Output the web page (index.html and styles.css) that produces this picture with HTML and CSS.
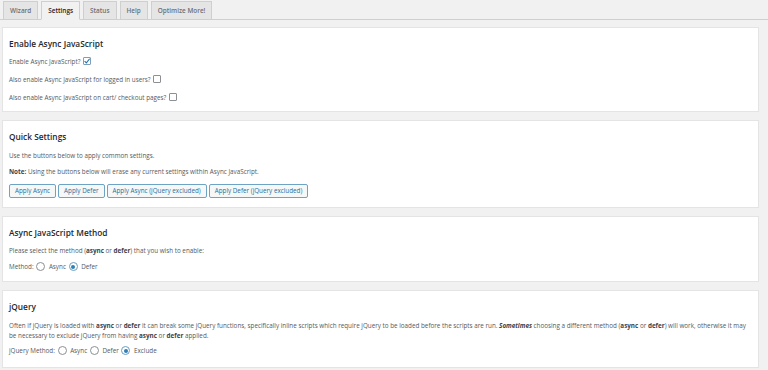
FILE: index.html
```html
<!DOCTYPE html>
<html>
<head>
<meta charset="utf-8">
<link rel="stylesheet" href="styles.css">
</head>
<body>
<div class="page">
  <nav class="tabs">
    <a class="tab">Wizard</a>
    <a class="tab active">Settings</a>
    <a class="tab">Status</a>
    <a class="tab">Help</a>
    <a class="tab">Optimize More!</a>
  </nav>
  <div class="panels">
    <section class="panel">
      <h2>Enable Async JavaScript</h2>
      <p class="first">Enable Async JavaScript? <span class="cb checked"><svg viewBox="0 0 10 10" width="8" height="8"><path d="M2 5.2 L4.2 7.3 L8.3 2.2" fill="none" stroke="#2271b1" stroke-width="1.4"/></svg></span></p>
      <p>Also enable Async JavaScript for logged in users? <span class="cb"></span></p>
      <p>Also enable Async JavaScript on cart/ checkout pages? <span class="cb"></span></p>
    </section>
    <section class="panel panel-quick">
      <h2>Quick Settings</h2>
      <p class="first">Use the buttons below to apply common settings.</p>
      <p class="note"><b>Note:</b> Using the buttons below will erase any current settings within Async JavaScript.</p>
      <div class="buttons">
        <button class="btn">Apply Async</button>
        <button class="btn">Apply Defer</button>
        <button class="btn">Apply Async (jQuery excluded)</button>
        <button class="btn">Apply Defer (jQuery excluded)</button>
      </div>
    </section>
    <section class="panel panel-method">
      <h2>Async JavaScript Method</h2>
      <p class="first">Please select the method (<b>async</b> or <b>defer</b>) that you wish to enable:</p>
      <p class="radios">Method: <span class="rd"></span> Async <span class="rd on"></span> Defer</p>
    </section>
    <section class="panel panel-jquery">
      <h2>jQuery</h2>
      <p class="para">Often if jQuery is loaded with <b>async</b> or <b>defer</b> it can break some jQuery functions, specifically inline scripts which require jQuery to be loaded before the scripts are run. <b><i>Sometimes</i></b> choosing a different method (<b>async</b> or <b>defer</b>) will work, otherwise it may<br>be necessary to exclude jQuery from having <b>async</b> or <b>defer</b> applied.</p>
      <p class="radios jq">jQuery Method: <span class="rd"></span> Async <span class="rd"></span> Defer <span class="rd on"></span> Exclude</p>
    </section>
  </div>
</div>
</body>
</html>
```
FILE: styles.css
```css
html, body {
  margin: 0;
  background: #f1f1f1;
}
body {
  font-family: "Open Sans", "Noto Sans", sans-serif;
  font-size: 6.3px;
  color: #555a60;
  height: 370px;
  overflow: hidden;
}
.tabs {
  display: flex;
  align-items: flex-end;
  gap: 3px;
  padding: 1px 0 0 3px;
  border-bottom: 1px solid #cfcfcf;
}
.tab {
  display: block;
  height: 17px;
  line-height: 17px;
  padding: 0 6px;
  margin-bottom: -1px;
  border: 1px solid #cfcfcf;
  background: #e5e5e5;
  font-size: 6.4px;
  font-weight: 600;
  color: #6a7076;
}
.tab.active {
  background: #f1f1f1;
  border-bottom-color: #f1f1f1;
  color: #1d2327;
}
.panels {
  display: flex;
  flex-direction: column;
  gap: 8px;
  padding: 7px 9px 0 2px;
}
.panel {
  background: #fff;
  border: 1px solid #e4e4e4;
  padding: 9px 6px 8px;
}
.panel-quick { padding-bottom: 9px; }
.panel-method { padding-bottom: 9px; }
.panel-jquery { padding-bottom: 11px; }
h2 {
  margin: 0;
  font-size: 8.3px;
  line-height: 14px;
  font-weight: 600;
  color: #23282d;
}
p {
  margin: 8px 0 0;
  line-height: 10px;
  white-space: nowrap;
}
p.first { margin-top: 6px; }
.panel-quick p.first { margin-top: 7px; }
.panel-quick p.note { margin-top: 6px; }
.panel-method .radios { margin-top: 6px; }
.para { margin-top: 7px; }
.jq { margin-top: 5px; }
b {
  font-weight: 700;
  color: #3c434a;
}
.cb {
  display: inline-block;
  box-sizing: border-box;
  width: 8px;
  height: 8px;
  border: 1px solid #8c8f94;
  border-radius: 1px;
  vertical-align: -1px;
  margin-left: 1px;
  position: relative;
  background: #fff;
}
.cb.checked {
  border-color: #7e9fb9;
}
.cb svg {
  position: absolute;
  left: -1px;
  top: -1px;
}
.buttons {
  display: flex;
  gap: 2px;
  margin-top: 7px;
}
.btn {
  height: 14px;
  padding: 0 5px;
  border: 1px solid #6fa3c4;
  border-radius: 2px;
  background: #f6f7f7;
  color: #2a6f9e;
  font-family: inherit;
  font-size: 6.3px;
  line-height: 12px;
  cursor: pointer;
}
.rd {
  display: inline-block;
  box-sizing: border-box;
  width: 9px;
  height: 9px;
  border: 1px solid #8c8f94;
  border-radius: 50%;
  vertical-align: -2px;
  margin: 0 2px 0 1px;
  position: relative;
  background: #fff;
}
.rd.on {
  border-color: #6c9ebf;
}
.rd.on::after {
  content: "";
  position: absolute;
  left: 1.5px;
  top: 1.5px;
  width: 4px;
  height: 4px;
  border-radius: 50%;
  background: #2f7fb5;
}
```
